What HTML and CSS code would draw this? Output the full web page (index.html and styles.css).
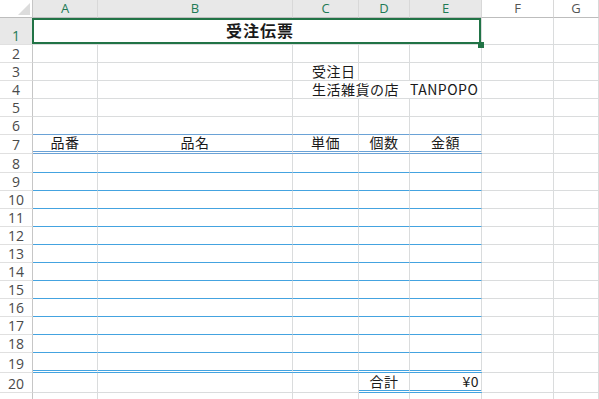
FILE: index.html
```html
<!DOCTYPE html>
<html>
  <head>
    <title>受注伝票</title>
    <link rel="stylesheet" href="styles.css">
  </head>
  <body>
    <div class="sheet">
      <div class="row hdr-row">
        <div class="corner"></div>
        <div class="ch sel">A</div>
        <div class="ch sel">B</div>
        <div class="ch sel">C</div>
        <div class="ch sel">D</div>
        <div class="ch sel">E</div>
        <div class="ch">F</div>
        <div class="ch">G</div>
      </div>
      <div class="row title-row">
        <div class="rh sel">1</div>
        <div class="c title-cell">受注伝票</div>
        <div class="c"></div>
        <div class="c"></div>
      </div>
      <div class="row">
        <div class="rh">2</div>
        <div class="c"></div><div class="c"></div><div class="c"></div><div class="c"></div><div class="c"></div><div class="c"></div><div class="c"></div>
      </div>
      <div class="row">
        <div class="rh">3</div>
        <div class="c"></div><div class="c"></div>
        <div class="c indent">受注日</div>
        <div class="c"></div><div class="c"></div><div class="c"></div><div class="c"></div>
      </div>
      <div class="row">
        <div class="rh">4</div>
        <div class="c"></div><div class="c"></div>
        <div class="c indent shop">生活雑貨の店&nbsp;&nbsp;&nbsp;TANPOPO</div>
        <div class="c"></div><div class="c"></div>
      </div>
      <div class="row">
        <div class="rh">5</div>
        <div class="c"></div><div class="c"></div><div class="c"></div><div class="c"></div><div class="c"></div><div class="c"></div><div class="c"></div>
      </div>
      <div class="row">
        <div class="rh">6</div>
        <div class="c bh"></div><div class="c bh"></div><div class="c bh"></div><div class="c bh"></div><div class="c bh"></div>
        <div class="c"></div><div class="c"></div>
      </div>
      <div class="row tall">
        <div class="rh">7</div>
        <div class="c dh ctr">品番</div>
        <div class="c dh ctr">品名</div>
        <div class="c dh ctr">単価</div>
        <div class="c dh ctr">個数</div>
        <div class="c dh ctr">金額</div>
        <div class="c"></div><div class="c"></div>
      </div>
      <div class="row tall">
        <div class="rh">8</div>
        <div class="c bl"></div><div class="c bl"></div><div class="c bl"></div><div class="c bl"></div><div class="c bl"></div>
        <div class="c"></div><div class="c"></div>
      </div>
      <div class="row">
        <div class="rh">9</div>
        <div class="c bl"></div><div class="c bl"></div><div class="c bl"></div><div class="c bl"></div><div class="c bl"></div>
        <div class="c"></div><div class="c"></div>
      </div>
      <div class="row">
        <div class="rh">10</div>
        <div class="c bl"></div><div class="c bl"></div><div class="c bl"></div><div class="c bl"></div><div class="c bl"></div>
        <div class="c"></div><div class="c"></div>
      </div>
      <div class="row">
        <div class="rh">11</div>
        <div class="c bl"></div><div class="c bl"></div><div class="c bl"></div><div class="c bl"></div><div class="c bl"></div>
        <div class="c"></div><div class="c"></div>
      </div>
      <div class="row">
        <div class="rh">12</div>
        <div class="c bl"></div><div class="c bl"></div><div class="c bl"></div><div class="c bl"></div><div class="c bl"></div>
        <div class="c"></div><div class="c"></div>
      </div>
      <div class="row">
        <div class="rh">13</div>
        <div class="c bl"></div><div class="c bl"></div><div class="c bl"></div><div class="c bl"></div><div class="c bl"></div>
        <div class="c"></div><div class="c"></div>
      </div>
      <div class="row">
        <div class="rh">14</div>
        <div class="c bl"></div><div class="c bl"></div><div class="c bl"></div><div class="c bl"></div><div class="c bl"></div>
        <div class="c"></div><div class="c"></div>
      </div>
      <div class="row">
        <div class="rh">15</div>
        <div class="c bl"></div><div class="c bl"></div><div class="c bl"></div><div class="c bl"></div><div class="c bl"></div>
        <div class="c"></div><div class="c"></div>
      </div>
      <div class="row">
        <div class="rh">16</div>
        <div class="c bl"></div><div class="c bl"></div><div class="c bl"></div><div class="c bl"></div><div class="c bl"></div>
        <div class="c"></div><div class="c"></div>
      </div>
      <div class="row">
        <div class="rh">17</div>
        <div class="c bl"></div><div class="c bl"></div><div class="c bl"></div><div class="c bl"></div><div class="c bl"></div>
        <div class="c"></div><div class="c"></div>
      </div>
      <div class="row">
        <div class="rh">18</div>
        <div class="c bl"></div><div class="c bl"></div><div class="c bl"></div><div class="c bl"></div><div class="c bl"></div>
        <div class="c"></div><div class="c"></div>
      </div>
      <div class="row dbl">
        <div class="rh">19</div>
        <div class="c dl"></div><div class="c dl"></div><div class="c dl"></div><div class="c dl"></div><div class="c dl"></div>
        <div class="c"></div><div class="c"></div>
      </div>
      <div class="row dbl">
        <div class="rh">20</div>
        <div class="c"></div><div class="c"></div><div class="c"></div>
        <div class="c dl ctr">合計</div>
        <div class="c dl rt">¥0</div>
        <div class="c"></div><div class="c"></div>
      </div>
      <div class="row">
        <div class="rh"></div>
        <div class="c"></div><div class="c"></div><div class="c"></div><div class="c"></div><div class="c"></div><div class="c"></div><div class="c"></div>
      </div>
    </div>
  </body>
</html>
```
FILE: styles.css
```css
body {
  margin: 0;
  background-color: #ffffff;
  overflow: hidden;
}
.sheet {
  width: 599px;
  font-family: "Noto Sans CJK JP", "Noto Sans", sans-serif;
  color: #1a1a1a;
}
.row {
  display: grid;
  grid-template-columns: 33px 65px 195px 66px 51px 72px 72px 1fr;
  height: 18px;
}
.row > div {
  box-sizing: border-box;
}
.hdr-row {
  height: 18px;
}
.title-row {
  height: 27px;
}
.tall {
  height: 19px;
}
.dbl {
  height: 20px;
}

/* headers */
.corner {
  position: relative;
  border-right: 1px solid #c6c6c6;
  border-bottom: 1px solid #bdbdbd;
}
.corner::after {
  content: "";
  position: absolute;
  right: 2px;
  bottom: 2px;
  border-left: 12px solid transparent;
  border-bottom: 12px solid #dcdcdc;
}
.ch {
  border-right: 1px solid #d8d8d8;
  border-bottom: 1px solid #bdbdbd;
  font-family: "Open Sans", "Noto Sans", sans-serif;
  font-size: 13px;
  line-height: 17px;
  text-align: center;
  color: #555555;
}
.ch.sel {
  background-color: #e8e8e8;
  color: #1e7a55;
}
.rh {
  display: flex;
  align-items: flex-end;
  justify-content: center;
  border-right: 1px solid #c6c6c6;
  border-bottom: 1px solid #e0e0e0;
  font-family: "Open Sans", "Noto Sans", sans-serif;
  font-size: 14px;
  line-height: 15px;
  padding-bottom: 1px;
  color: #4a4a4a;
}
.rh.sel {
  background-color: #e8e8e8;
  color: #1e7a55;
}

/* cells */
.c {
  display: flex;
  align-items: flex-end;
  border-right: 1px solid #dadcdd;
  border-bottom: 1px solid #dadcdd;
  padding: 0 2px 1px;
  font-size: 14px;
  letter-spacing: 0.5px;
  line-height: 15px;
  white-space: nowrap;
}
.ctr {
  justify-content: center;
}
.rt {
  justify-content: flex-end;
}
.indent {
  padding-left: 19px;
}
.shop {
  grid-column: span 3;
}
.title-cell {
  grid-column: span 5;
  position: relative;
  align-items: center;
  justify-content: center;
  font-size: 16px;
  font-weight: bold;
  letter-spacing: 1px;
  padding: 0 0 1px 6px;
}
.title-cell::before {
  content: "";
  position: absolute;
  top: 0;
  left: -1px;
  right: 0;
  bottom: 0;
  border: 2px solid #217346;
}
.title-cell::after {
  content: "";
  position: absolute;
  right: -3px;
  bottom: -4px;
  width: 6px;
  height: 6px;
  background-color: #217346;
}

/* borders */
.bh {
  border-bottom-color: #6aa2d6;
}
.dh {
  border-bottom: 3px double #6aa2d6;
}
.bl {
  border-bottom-color: #44a3e0;
}
.dl {
  border-bottom: 3px double #44a3e0;
}
```
